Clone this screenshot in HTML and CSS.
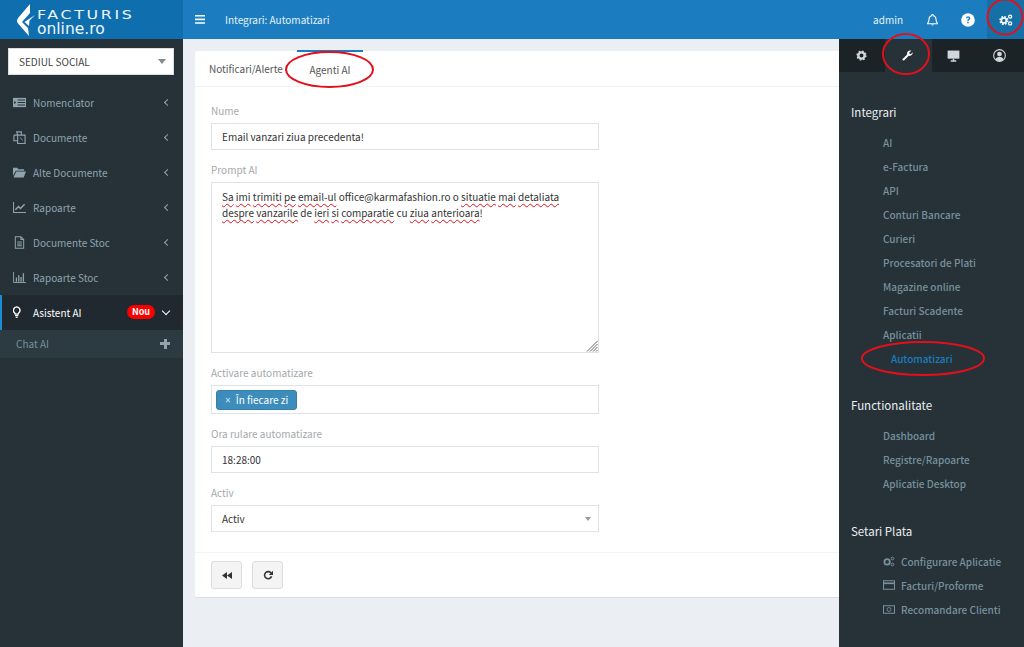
FILE: index.html
```html
<!DOCTYPE html>
<html lang="ro">
<head>
<meta charset="utf-8">
<title>Integrari: Automatizari</title>
<link rel="stylesheet" href="styles.css">
</head>
<body>
<div class="app">
  <header class="topbar">
    <div class="brand">
      <svg class="brand-mark" viewBox="0 0 20 32" width="20" height="32"><path d="M14 0 2.500 13.500c-2 2.500-2 4.500 0 6.500L13 32l-1-8-6-6 8-9z" fill="#fff"/><path d="M19 11 8.500 18l4.500 4 .5-5.500z" fill="#fff"/></svg>
      <div class="brand-text"><span class="brand-top">FACTURIS</span><span class="brand-bottom">online.ro</span></div>
    </div>
    <div class="topbar-main">
      <svg class="menu-icon" viewBox="0 0 10 9" width="10" height="9"><path d="M0 0h10v1.600H0zM0 3.600h10v1.600H0zM0 7.200h10v1.600H0z" fill="#fff"/></svg>
      <span class="page-title">Integrari: Automatizari</span>
      <div class="top-actions">
        <span class="admin">admin</span>
        <svg class="top-icon" viewBox="0 0 16 16" width="13" height="14"><path d="M8 1.200a1 1 0 0 1 1 1v.5a4.400 4.400 0 0 1 3.300 4.300c0 3 .9 3.900 1.700 4.800v.7H2v-.7c.8-.9 1.700-1.800 1.700-4.800A4.400 4.400 0 0 1 7 2.700v-.5a1 1 0 0 1 1-1z" fill="none" stroke="#fff" stroke-width="1.300"/><path d="M6.300 13.600a1.800 1.800 0 0 0 3.400 0z" fill="#fff"/></svg>
        <svg class="top-icon help" viewBox="0 0 14 14" width="14" height="14"><circle cx="7" cy="7" r="6.800" fill="#fff"/><path d="M4.900 5.300C5 4 6 3.300 7.100 3.300c1.200 0 2.200.8 2.200 1.900 0 1.500-1.700 1.500-1.700 2.800H6.200c0-1.900 1.600-1.900 1.600-2.800 0-.4-.3-.7-.8-.7s-.8.300-.9.800z" fill="#1b7dbf"/><rect x="6.200" y="8.800" width="1.500" height="1.500" fill="#1b7dbf"/></svg>
        <div class="gear-box">
          <svg viewBox="0 0 16 14" width="14" height="12"><circle cx="5.500" cy="7.500" r="4.200" fill="none" stroke="#fff" stroke-width="2.200" stroke-dasharray="1.900 1.400"/><circle cx="5.500" cy="7.500" r="2.900" fill="none" stroke="#fff" stroke-width="1.800"/><circle cx="12.800" cy="3" r="1.800" fill="none" stroke="#fff" stroke-width="1.500"/><circle cx="12.800" cy="11" r="1.800" fill="none" stroke="#fff" stroke-width="1.500"/></svg>
        </div>
      </div>
    </div>
  </header>

  <div class="body">
    <aside class="sidebar">
      <div class="branch-select"><span>SEDIUL SOCIAL</span><i class="caret"></i></div>
      <nav class="nav">
        <a class="nav-item">
          <svg class="nav-icon" viewBox="0 0 14 12"><path d="M0 1h14v10H0z" fill="#90a4ae"/><path d="M5 3.200h8M5 6h8M5 8.800h8" stroke="#263238" stroke-width="1.100" fill="none"/><path d="M1.300 4l2 2-2 2z" fill="#263238"/></svg>
          <span class="nav-label">Nomenclator</span><i class="chev"></i>
        </a>
        <a class="nav-item">
          <svg class="nav-icon" viewBox="0 0 14 14"><path d="M1 4.500h4l-1-3.500h5v3M5 4.500h8v9H5zM1 4.500v6h4" fill="none" stroke="#90a4ae" stroke-width="1.200"/><path d="M7.500 7l3 3" stroke="#90a4ae"/></svg>
          <span class="nav-label">Documente</span><i class="chev"></i>
        </a>
        <a class="nav-item">
          <svg class="nav-icon" viewBox="0 0 14 12"><path d="M0 1h4.500l1.300 1.500H12v1.500H3L0 9.500z" fill="#90a4ae"/><path d="M3.500 5H14l-2.500 6.500H.5z" fill="#90a4ae"/></svg>
          <span class="nav-label">Alte Documente</span><i class="chev"></i>
        </a>
        <a class="nav-item">
          <svg class="nav-icon" viewBox="0 0 14 12"><path d="M.6 0v11.400H14" fill="none" stroke="#90a4ae" stroke-width="1.100"/><path d="M2.500 8.500 6 5l2 2 4.500-4.500" fill="none" stroke="#90a4ae" stroke-width="1.600"/></svg>
          <span class="nav-label">Rapoarte</span><i class="chev"></i>
        </a>
        <a class="nav-item">
          <svg class="nav-icon" viewBox="0 0 14 14"><path d="M2.500.7h6l3 3v9.600h-9zM8.500.7v3h3M4.500 6.500h5M4.500 8.500h5M4.500 10.500h5" fill="none" stroke="#90a4ae" stroke-width="1.100"/></svg>
          <span class="nav-label">Documente Stoc</span><i class="chev"></i>
        </a>
        <a class="nav-item">
          <svg class="nav-icon" viewBox="0 0 14 12"><path d="M.6 0v11.400H14" fill="none" stroke="#90a4ae"/><path d="M3 6h1.400v4.500H3zM5.500 3.500h1.400v7H5.500z" fill="#90a4ae"/><path d="M8 5.500h1.400v5H8zM10.500 1.500h1.400v9h-1.400z" fill="#90a4ae"/></svg>
          <span class="nav-label">Rapoarte Stoc</span><i class="chev"></i>
        </a>
        <a class="nav-item active">
          <svg class="nav-icon" viewBox="3 0 14 14"><path d="M7 1a3.600 3.600 0 0 0-2.200 6.400c.4.400.6.900.6 1.400h3.200c0-.5.200-1 .6-1.400A3.600 3.600 0 0 0 7 1z" fill="none" stroke="#fff" stroke-width="1.500"/><path d="M5.300 9.800h3.400v1.200H5.300zM6 11.500h2v1.300H6z" fill="#fff"/></svg>
          <span class="nav-label">Asistent AI</span>
          <span class="badge">Nou</span>
          <i class="chev down"></i>
        </a>
        <a class="sub-item"><span>Chat AI</span><span class="plus"></span></a>
      </nav>
    </aside>

    <main class="content">
      <section class="card">
        <div class="tabs">
          <div class="tab">Notificari/Alerte</div>
          <div class="tab current">Agenti AI</div>
        </div>
        <form class="form">
          <div class="field">
            <label>Nume</label>
            <div class="input">Email vanzari ziua precedenta!</div>
          </div>
          <div class="field">
            <label>Prompt AI</label>
            <div class="textarea">
              <p><u>Sa</u> <u>imi</u> <u>trimiti</u> <u>pe</u> <u>email-ul</u> office@karmafashion.ro o <u>situatie</u> <u>mai</u> <u>detaliata</u><br><u>despre</u> <u>vanzarile</u> de <u>ieri</u> <u>si</u> <u>comparatie</u> cu <u>ziua</u> <u>anterioara</u>!</p>
              <svg class="grip" viewBox="0 0 12 12" width="12" height="12"><path d="M11.500 1 1 11.500M11.500 4 4 11.500M11.500 7 7 11.500M11.500 10l-1.500 1.500" stroke="#666" stroke-width="1"/></svg>
            </div>
          </div>
          <div class="field">
            <label>Activare automatizare</label>
            <div class="input tags"><span class="tag"><b>×</b>În fiecare zi</span></div>
          </div>
          <div class="field">
            <label>Ora rulare automatizare</label>
            <div class="input">18:28:00</div>
          </div>
          <div class="field">
            <label>Activ</label>
            <div class="input select">Activ<i class="caret small"></i></div>
          </div>
        </form>
        <div class="footer">
          <button class="btn" type="button"><svg viewBox="0 0 10 7" width="10" height="7"><path d="M5 0v7L0 3.500zM10 0v7L5 3.500z" fill="#333"/></svg></button>
          <button class="btn" type="button"><svg viewBox="0 0 12 12" width="10" height="10"><path d="M10 4.200A4.300 4.300 0 1 0 10.300 7.500" fill="none" stroke="#333" stroke-width="1.900"/><path d="M12 1v5H7z" fill="#333"/></svg></button>
        </div>
      </section>
    </main>

    <aside class="panel">
      <div class="panel-tabs">
        <div class="ptab"><svg viewBox="0 0 14 14" width="11" height="11"><circle cx="7" cy="7" r="4" fill="none" stroke="#cfd8dc" stroke-width="3"/><circle cx="7" cy="7" r="5.300" fill="none" stroke="#cfd8dc" stroke-width="2.400" stroke-dasharray="2 2.160"/></svg></div>
        <div class="ptab current"><svg viewBox="0 0 14 14" width="11" height="11"><path d="M.8 11.500 6.500 5.800C6 3.500 7 1 10 .7c.8-.1 1.300 0 1.800.2L9.300 3.300l.4 1.600 1.500.4 2.400-2.400c.3 3-2.100 5.100-5 4.500l-5.700 5.700c-1.400.9-2.900-.6-2.300-1.600z" fill="#fff"/></svg></div>
        <div class="ptab"><svg viewBox="0 0 14 13" width="13" height="12"><path d="M.6.600h12.800v8.800H.6z" fill="#cfd8dc"/><path d="M4 12h6M7 9.500V12" stroke="#cfd8dc" stroke-width="1.600"/></svg></div>
        <div class="ptab"><svg viewBox="0 0 14 14" width="13" height="13"><circle cx="7" cy="7" r="6.300" fill="none" stroke="#cfd8dc" stroke-width="1.200"/><circle cx="7" cy="5.500" r="2.600" fill="#cfd8dc"/><path d="M2.600 11.200C3.500 9.200 5 8.600 7 8.600s3.500.6 4.400 2.600A6 6 0 0 1 2.600 11.200z" fill="#cfd8dc"/></svg></div>
      </div>
      <div class="panel-body">
        <h3>Integrari</h3>
        <ul>
          <li>AI</li><li>e-Factura</li><li>API</li><li>Conturi Bancare</li><li>Curieri</li><li>Procesatori de Plati</li><li>Magazine online</li><li>Facturi Scadente</li><li>Aplicatii</li>
          <li class="selected">Automatizari</li>
        </ul>
        <h3 class="func">Functionalitate</h3>
        <ul>
          <li>Dashboard</li><li>Registre/Rapoarte</li><li>Aplicatie Desktop</li>
        </ul>
        <h3 class="pay">Setari Plata</h3>
        <ul>
          <li class="with-icon"><svg viewBox="0 0 16 14" width="12" height="11"><circle cx="5.500" cy="7.500" r="3.600" fill="none" stroke="#78909c" stroke-width="2.400"/><circle cx="12.600" cy="3" r="1.800" fill="none" stroke="#78909c" stroke-width="1.300"/><circle cx="12.600" cy="11" r="1.800" fill="none" stroke="#78909c" stroke-width="1.300"/></svg>Configurare Aplicatie</li>
          <li class="with-icon"><svg viewBox="0 0 14 11" width="12" height="10"><path d="M.6.600h12.800v9.800H.6z" fill="none" stroke="#78909c" stroke-width="1.200"/><path d="M.6 2.500h12.800v2H.6z" fill="#78909c"/></svg>Facturi/Proforme</li>
          <li class="with-icon"><svg viewBox="0 0 14 10" width="12" height="9"><path d="M.6.600h12.800v8.800H.6z" fill="none" stroke="#78909c" stroke-width="1.200"/><circle cx="7" cy="5" r="2.300" fill="none" stroke="#78909c"/></svg>Recomandare Clienti</li>
        </ul>
      </div>
    </aside>
  </div>

  <svg class="marks" viewBox="0 0 1024 647" width="1024" height="647" aria-hidden="true">
    <g fill="none" stroke="#e2101c" stroke-width="2">
      <ellipse cx="329.500" cy="69.500" rx="43.500" ry="17.500"/>
      <ellipse cx="906" cy="54" rx="23" ry="20"/>
      <ellipse cx="1005" cy="17" rx="17.500" ry="17.500"/>
      <ellipse cx="923" cy="358.500" rx="61" ry="16.500"/>
    </g>
  </svg>
</div>
</body>
</html>
```

FILE: styles.css
```css
* { box-sizing: border-box; }
html, body { margin: 0; height: 100%; }
body {
  font-family: "Noto Sans CJK SC", "Noto Sans", "Liberation Sans", sans-serif;
  font-size: 10px;
  color: #333;
  background: #ebeff4;
  overflow: hidden;
}
.app { position: relative; width: 1024px; height: 647px; display: flex; flex-direction: column; }
.marks { position: absolute; left: 0; top: 0; pointer-events: none; }

/* Top bar */
.topbar { height: 39px; display: flex; flex: none; }
.brand {
  width: 183px; flex: none; background: #0f6fae;
  display: flex; align-items: center; padding-left: 16px; gap: 1px;
}
.brand-mark { flex: none; }
.brand-text { display: flex; flex-direction: column; color: #eef5fa; line-height: 1; padding-top: 5px; }
.brand-top { font-family: "DejaVu Sans", sans-serif; font-size: 12px; letter-spacing: 2px; line-height: 14px; transform: scaleX(1.32); transform-origin: left center; }
.brand-bottom { font-family: "DejaVu Sans", sans-serif; font-size: 15.500px; line-height: 15px; }
.topbar-main { flex: 1; background: #1b7dbf; display: flex; align-items: center; padding-left: 12px; color: #fff; }
.menu-icon { flex: none; }
.page-title { margin-left: 20px; color: #e6f1f8; }
.top-actions { margin-left: auto; display: flex; align-items: center; height: 100%; }
.admin { margin-right: 23px; color: #e6f1f8; }
.top-icon { flex: none; margin-right: 22px; }
.top-icon.help { margin-right: 12px; }
.gear-box { width: 37px; height: 100%; background: #176fa8; display: flex; align-items: center; justify-content: center; }

.body { flex: 1; display: flex; min-height: 0; }

/* Left sidebar */
.sidebar { width: 183px; flex: none; background: #263238; padding-top: 9px; }
.branch-select {
  margin: 0 9px 0 8px; height: 27px; background: #fff; border: 1px solid #d9dee4;
  display: flex; align-items: center; justify-content: space-between;
  padding: 0 7px 0 10px; color: #444;
}
.caret { width: 0; height: 0; border: 4px solid transparent; border-top: 5px solid #888; border-bottom: 0; }
.caret.small { border-width: 4px 3.500px 0; border-top-color: #999; }
.nav { margin-top: 10px; display: flex; flex-direction: column; }
.nav-item {
  height: 35px; display: flex; align-items: center; padding: 0 13px 1px 13px; color: #90a4ae;
}
.nav-icon { width: 13px; height: 13px; flex: none; margin-right: 7px; }
.nav-label { flex: 1; }
.chev {
  width: 5px; height: 5px; border-left: 1.200px solid #90a4ae; border-bottom: 1.200px solid #90a4ae;
  transform: rotate(45deg); flex: none;
}
.chev.down { transform: rotate(-45deg); margin-left: 8px; margin-right: 1px; width: 6px; height: 6px; border-color: #fff; margin-top: -3px; }
.nav-item.active { background: #1f292f; color: #fff; box-shadow: inset 2px 0 0 #1b8ed2; }
.badge { background: #f90000; color: #fff; font-size: 9px; font-weight: 700; border-radius: 8px; height: 14px; line-height: 14px; width: 28px; text-align: center; }
.sub-item { height: 28px; background: #2c3a41; display: flex; align-items: center; justify-content: space-between; padding: 0 13px 1px 16px; color: #78909c; }
.plus { width: 10px; height: 10px; background:
  linear-gradient(#90a4ae, #90a4ae) center / 100% 3px no-repeat,
  linear-gradient(#90a4ae, #90a4ae) center / 3px 100% no-repeat; }

/* Main */
.content { flex: 1; padding: 12px 0 0 12px; min-width: 0; }
.card { background: #fff; border-bottom: 1px solid #d8dde3; border-radius: 3px 0 0 3px; }
.tabs { height: 36px; display: flex; border-bottom: 1px solid #f0f2f5; }
.tab { display: flex; align-items: center; padding: 0 0 0 14px; color: #555; width: 102px; white-space: nowrap; }
.tab.current { width: 66px; margin-top: -1px; border-top: 2px solid #1b7dbf; justify-content: center; padding: 0; }
.form { padding: 17px 0 0 16px; width: 420px; }
.field { margin-bottom: 13px; width: 388px; }
.field label { display: block; color: #a5a9ad; line-height: 14px; margin-bottom: 5px; }
.input { height: 27px; border: 1px solid #dfe3e8; display: flex; align-items: center; padding: 0 10px; color: #333; }
.textarea { position: relative; height: 171px; border: 1px solid #dfe3e8; padding: 6px 10px; line-height: 16px; }
.textarea p { margin: 0; }
.textarea u { text-decoration: underline wavy #e2101c 1px; text-underline-offset: 2px; }
.grip { position: absolute; right: 0; bottom: 0; }
.tags { padding-left: 4px; height: 29px; }
.tag { background: #3c8dbc; border: 1px solid #367fa9; border-radius: 3px; color: #fff; height: 20px; display: flex; align-items: center; padding: 0 8px; }
.tag b { font-family: "Noto Sans", sans-serif; font-weight: 400; margin-right: 5px; opacity: .75; }
.select { justify-content: space-between; padding-right: 7px; }
.footer { margin-top: 20px; border-top: 1px solid #f3f4f6; padding: 8px 16px; display: flex; gap: 10px; }
.btn { width: 31px; height: 28px; background: #f4f4f4; border: 1px solid #ddd; border-radius: 3px; padding: 0; display: flex; align-items: center; justify-content: center; }

/* Right panel */
.panel { width: 185px; flex: none; background: #263238; display: flex; flex-direction: column; }
.panel-tabs { height: 33px; display: flex; background: #1b2327; flex: none; }
.ptab { flex: 1; display: flex; align-items: center; justify-content: center; padding-right: 2px; }
.ptab.current { background: #263238; }
.panel-body { padding: 32px 0 0 12px; color: #78909c; font-weight: 500; }
.panel-body h3 { margin: 0 0 10px; font-size: 11.500px; font-weight: 400; line-height: 16px; color: #eceff1; }
.panel-body h3.func { margin-top: 27px; }
.panel-body h3.pay { margin-top: 28px; }
.panel-body ul { list-style: none; margin: 0 0 26px; padding: 0 0 0 32px; }
.panel-body li { height: 24px; display: flex; align-items: center; }
.panel-body li.selected { color: #1b7dbf; padding-left: 8px; }
.with-icon svg { margin-right: 6px; flex: none; }
```
